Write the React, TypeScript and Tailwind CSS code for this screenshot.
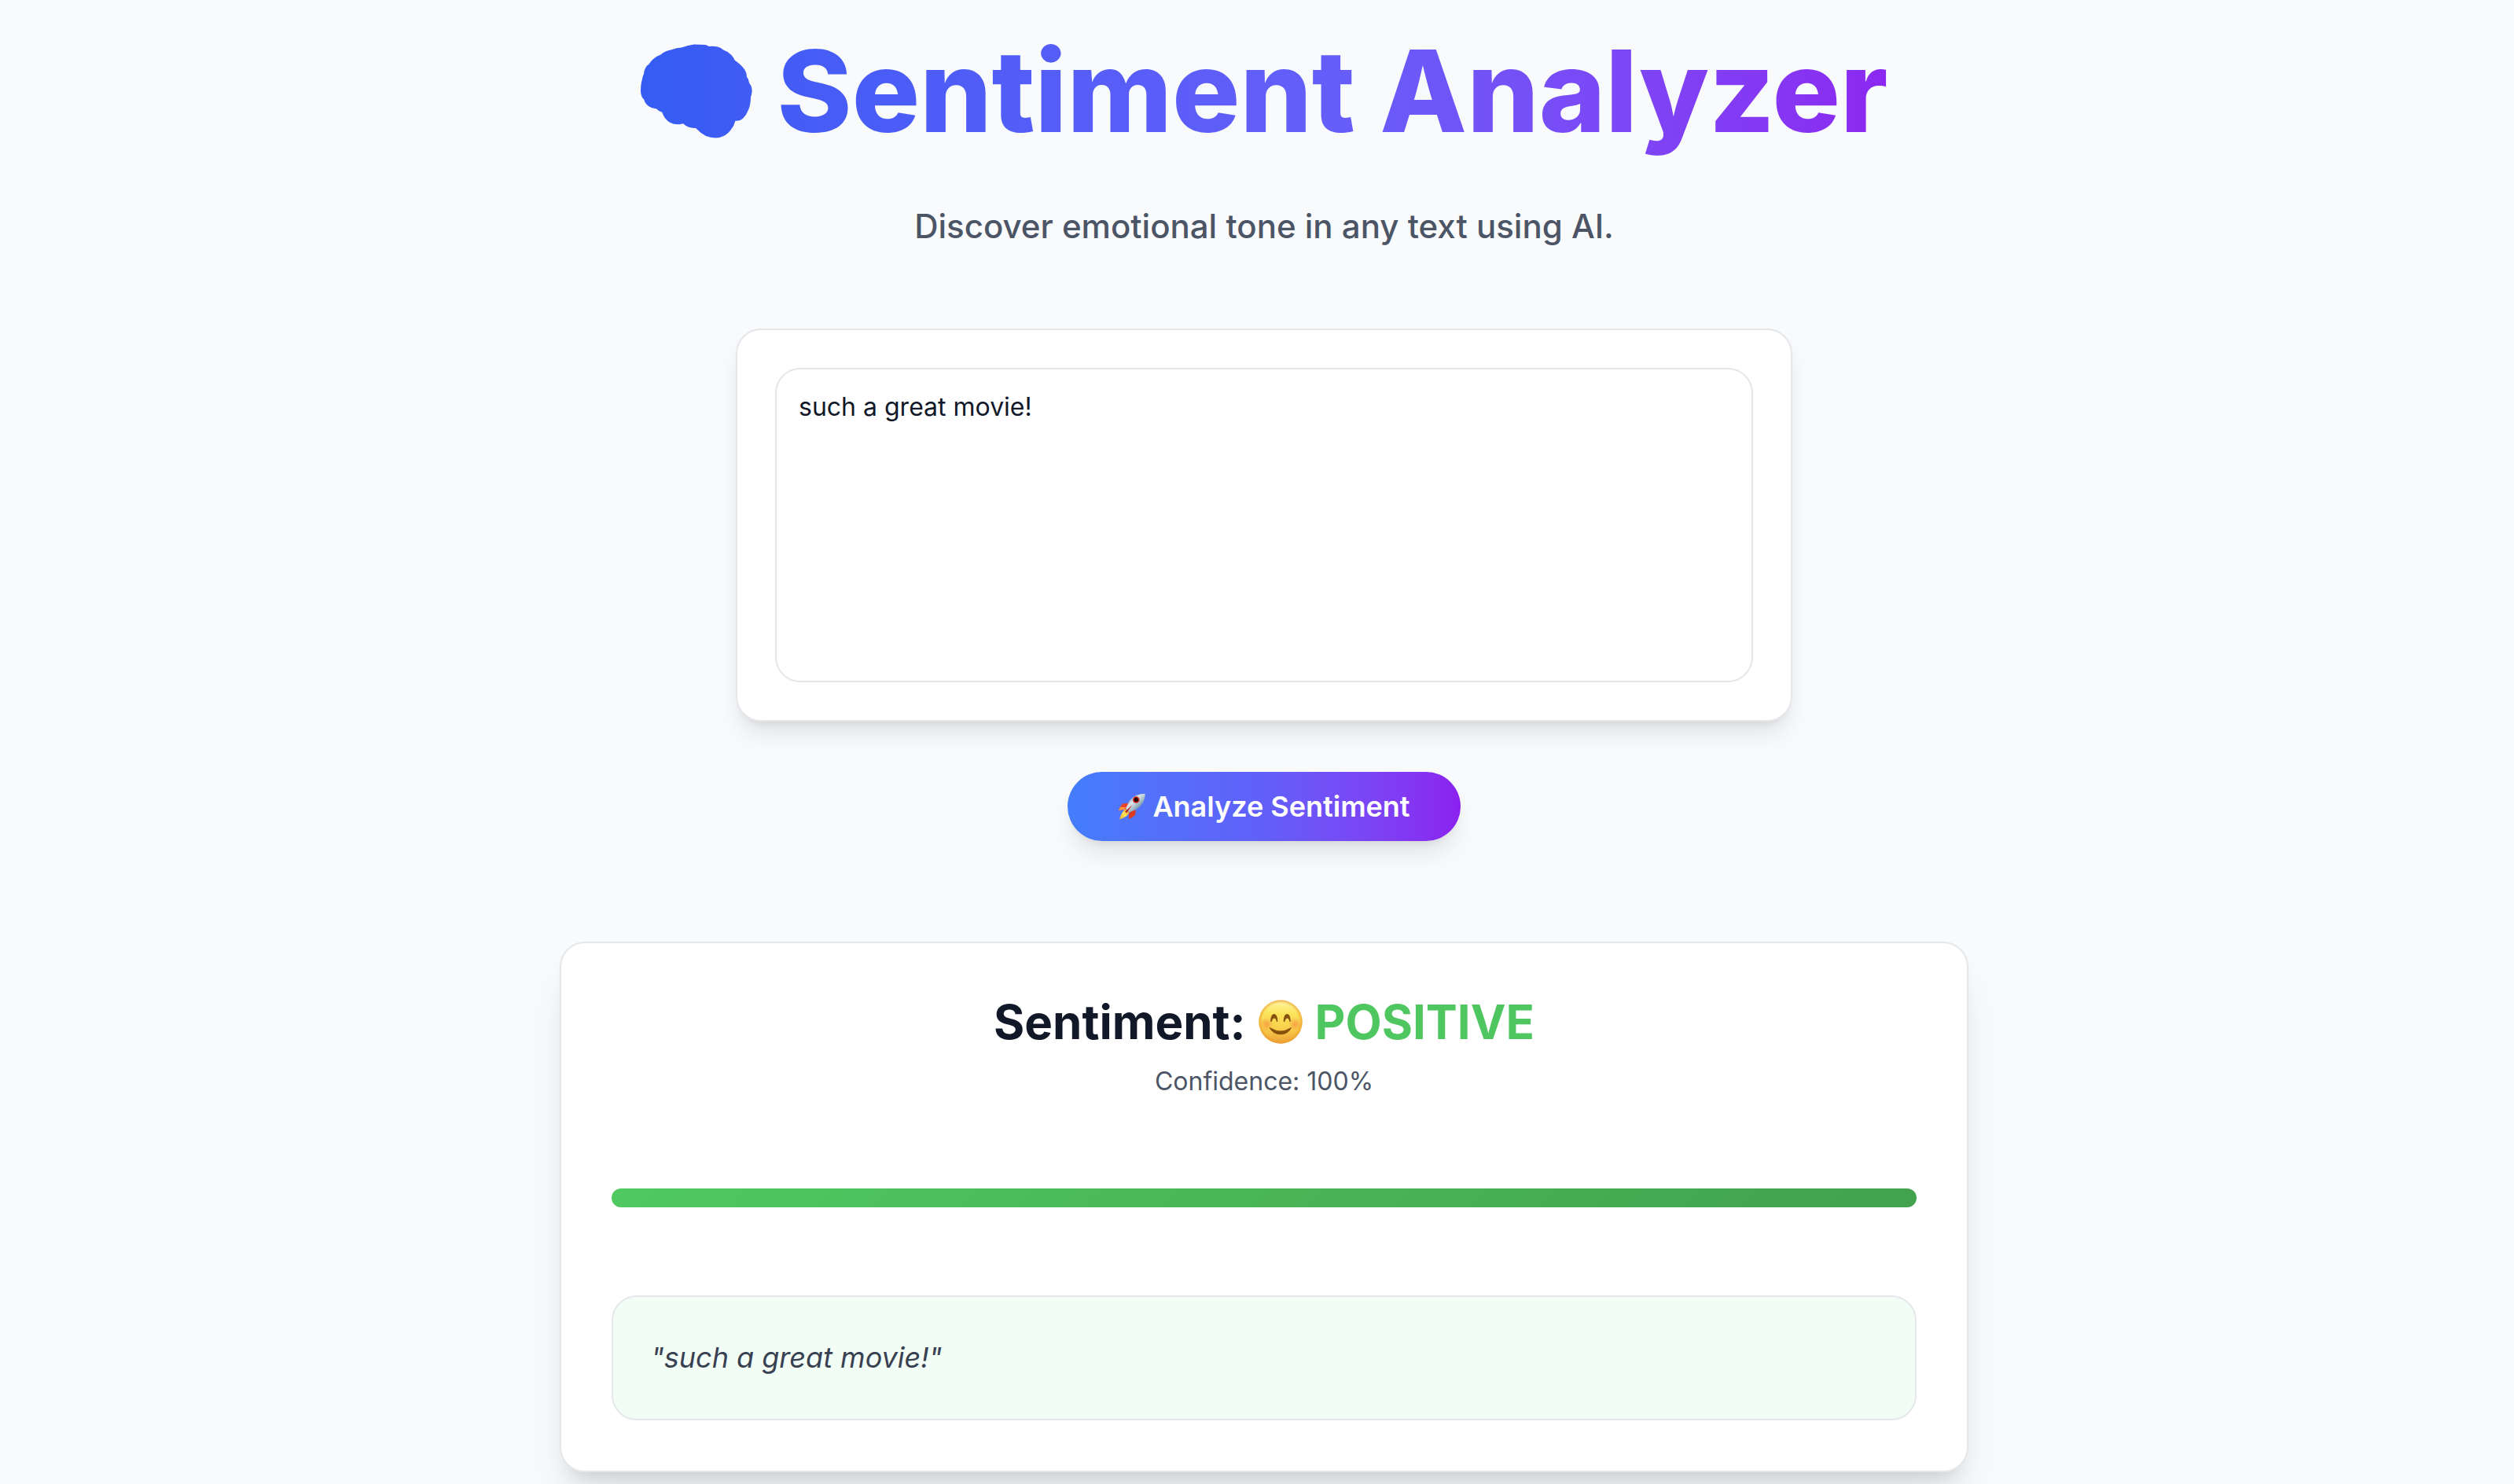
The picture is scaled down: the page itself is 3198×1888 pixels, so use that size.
import { useState } from "react";

function BrainIcon() {
  return (
    <svg viewBox="105 109 428 359" className="h-[120px] w-[142px] shrink-0" role="img" aria-label="Brain">
      <defs>
        <linearGradient id="brain" x1="0" y1="0" x2="1" y2="0">
          <stop offset="0" stopColor="#345cf4" />
          <stop offset="1" stopColor="#405cf4" />
        </linearGradient>
      </defs>
      <path
        fill="url(#brain)"
        d="M310 109 L352 111 Q360 113 366 117 Q380 115 400 118 Q412 121 422 130 Q440 136 452 149 Q460 157 466 170 Q490 186 504 206 Q512 218 512 234 Q520 242 521 256 Q532 270 532 284 Q532 298 527 312 Q527 340 518 360 Q512 378 496 394 Q486 404 468 402 Q464 420 450 438 Q440 452 428 458 Q412 467 392 468 Q372 467 355 460 Q335 450 316 430 Q288 432 268 413 Q240 420 218 409 Q196 396 187 369 Q174 366 166 356 Q142 354 128 340 Q120 332 118 321 Q107 312 105 290 Q105 262 110 246 Q112 232 117 222 Q119 202 130 190 Q137 186 143 176 Q156 158 182 148 Q200 133 226 129 Q242 121 262 121 Q286 112 310 109 Z"
      />
    </svg>
  );
}

function RocketIcon() {
  return (
    <svg viewBox="36 36 110 108" className="size-9 shrink-0" aria-hidden="true">
      <defs>
        <linearGradient id="hull" x1="0" y1="0" x2="1" y2="1">
          <stop offset="0.15" stopColor="#5f7f9c" />
          <stop offset="0.4" stopColor="#dfe6ea" />
          <stop offset="0.6" stopColor="#a3bac8" />
          <stop offset="0.9" stopColor="#2d5f8c" />
        </linearGradient>
        <linearGradient id="flame" x1="1" y1="0" x2="0" y2="1">
          <stop offset="0" stopColor="#f79a1e" />
          <stop offset="0.5" stopColor="#ffe45a" />
          <stop offset="1" stopColor="#f8a531" />
        </linearGradient>
      </defs>
      <path d="M80 76 L54 79 Q44 90 38 105 L66 102 Z" fill="#e8432a" />
      <path d="M38 105 L46 92 L66 93 L62 102 Z" fill="#fb9a3c" />
      <path d="M105 102 L104 122 Q94 134 78 138 L80 114 Z" fill="#e03a22" />
      <path d="M66 100 L80 112 Q76 126 60 133 L43 141 Q46 116 66 100 Z" fill="url(#flame)" />
      <path d="M142 40 C116 40 92 50 80 70 L67 98 L82 112 L110 100 C134 84 142 62 142 40 Z" fill="url(#hull)" />
      <path d="M92 84 L70 116 L64 110 Z" fill="#b8261a" />
      <circle cx="107" cy="64" r="13" fill="#c9251c" />
      <circle cx="107" cy="64" r="8" fill="#25090a" />
    </svg>
  );
}

function SmileIcon() {
  return (
    <svg viewBox="34 34 166 166" className="size-14 shrink-0" role="img" aria-label="Smiling face">
      <defs>
        <linearGradient id="face" x1="0" y1="0" x2="0" y2="1">
          <stop offset="0" stopColor="#fef6a8" />
          <stop offset="0.3" stopColor="#fbe45c" />
          <stop offset="0.65" stopColor="#f8cf4a" />
          <stop offset="1" stopColor="#ec9f38" />
        </linearGradient>
        <radialGradient id="edge">
          <stop offset="0.84" stopColor="#f0a030" stopOpacity="0" />
          <stop offset="1" stopColor="#eb9a2e" stopOpacity="0.75" />
        </radialGradient>
        <radialGradient id="cheek">
          <stop offset="0" stopColor="#f5803c" stopOpacity="0.6" />
          <stop offset="1" stopColor="#f5803c" stopOpacity="0" />
        </radialGradient>
      </defs>
      <circle cx="117" cy="117" r="82" fill="url(#face)" />
      <circle cx="117" cy="117" r="82" fill="url(#edge)" />
      <circle cx="64" cy="126" r="26" fill="url(#cheek)" />
      <circle cx="172" cy="126" r="26" fill="url(#cheek)" />
      <path
        d="M79 115 C79 78 106 78 106 115 Q106 119 102 116 C98 100 88 100 84 116 Q80 119 79 115 Z M128 115 C128 78 155 78 155 115 Q155 119 151 116 C147 100 137 100 133 116 Q129 119 128 115 Z"
        fill="#87510f"
      />
      <path d="M75 140 Q75 136 80 140 Q117 162 153 140 Q158 136 158 140 Q146 165 117 165 Q88 165 75 140 Z" fill="#87510f" />
    </svg>
  );
}

export default function App() {
  const [text, setText] = useState("such a great movie!");

  return (
    <main className="flex min-h-screen flex-col items-center bg-[#f9fafc] pt-[26px] pl-[18px] font-['Inter',sans-serif] text-[#111828]">
      <h1 className="flex items-center gap-8 text-[144px] leading-[180px] font-extrabold">
        <BrainIcon />
        <span className="bg-linear-to-r from-[#435cf5] via-[#655efa] to-[#8c27f1] bg-clip-text text-transparent">
          Sentiment Analyzer
        </span>
      </h1>
      <p className="mt-[54px] text-[42px] leading-[56px] font-medium text-[#4b5565]">
        Discover emotional tone in any text using AI.
      </p>

      <section className="mt-[102px] w-full max-w-[1344px] rounded-[32px] border-2 border-[#e5e7eb] bg-white p-12 shadow-[0_20px_30px_-6px_rgba(0,0,0,0.1),0_8px_12px_-8px_rgba(0,0,0,0.1)]">
        <textarea
          aria-label="Text to analyze"
          value={text}
          onChange={(e) => setText(e.target.value)}
          className="block h-[400px] w-full resize-none rounded-[32px] border-2 border-[#e5e7eb] bg-white px-7 py-6 text-[32px] leading-[48px] outline-none"
        />
      </section>

      <button
        type="button"
        className="mt-16 flex h-[88px] items-center gap-2 rounded-full bg-linear-to-r from-[#437dfb] via-[#615ffa] to-[#8b20ef] px-16 text-[36px] leading-[56px] font-semibold text-white shadow-[0_20px_30px_-6px_rgba(0,0,0,0.1),0_8px_12px_-8px_rgba(0,0,0,0.1)]"
      >
        <RocketIcon />
        Analyze Sentiment
      </button>

      <section className="mt-32 mb-[15px] w-full max-w-[1792px] rounded-[32px] border-2 border-[#e5e7eb] bg-white p-16 shadow-[0_40px_50px_-10px_rgba(0,0,0,0.1),0_16px_20px_-12px_rgba(0,0,0,0.1)]">
        <h2 className="flex items-center justify-center gap-4 text-[60px] leading-[72px] font-bold">
          Sentiment:
          <SmileIcon />
          <span className="text-[#50c661]">POSITIVE</span>
        </h2>
        <p className="mt-4 text-center text-[32px] leading-[48px] text-[#4b5565]">Confidence: 100%</p>
        <div
          role="progressbar"
          aria-label="Confidence"
          aria-valuenow={100}
          className="mt-28 h-6 w-full rounded-full bg-linear-135 from-[#50c961] to-[#42a24d]"
        />
        <blockquote className="mt-28 rounded-[32px] border-2 border-[#e5e7eb] bg-[#f2fdf5] p-12 text-[36px] leading-[59px] text-[#384151] italic">
          "{text}"
        </blockquote>
      </section>
    </main>
  );
}
